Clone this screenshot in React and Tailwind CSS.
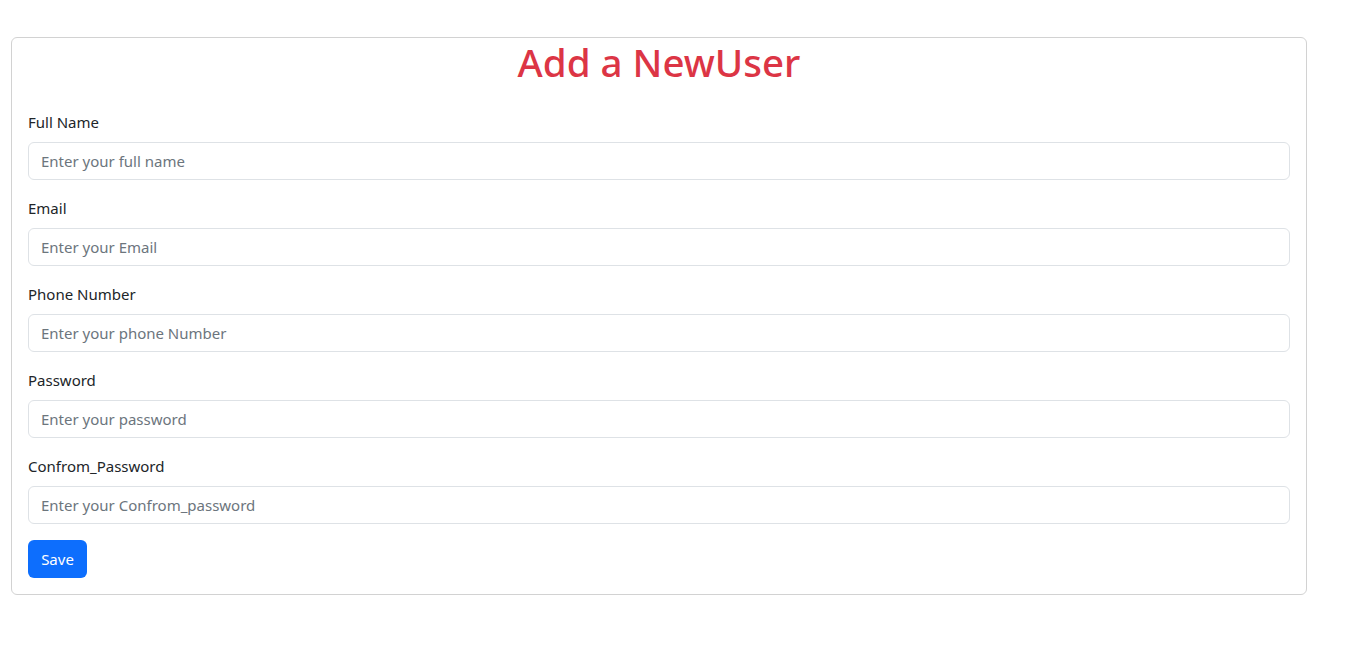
import { useState } from "react";

const fields = [
  { label: "Full Name", name: "name", type: "text", placeholder: "Enter your full name" },
  { label: "Email", name: "email", type: "email", placeholder: "Enter your Email" },
  { label: "Phone Number", name: "phone", type: "text", placeholder: "Enter your phone Number" },
  { label: "Password", name: "password", type: "password", placeholder: "Enter your password" },
  { label: "Confrom_Password", name: "confirm", type: "password", placeholder: "Enter your Confrom_password" },
];

const App = () => {
  const [form, setForm] = useState({});

  const handleChange = (e) => setForm({ ...form, [e.target.name]: e.target.value });

  return (
    <div className="min-h-screen bg-white pt-[37px] pl-[11px] font-['Noto_Sans',sans-serif] text-[#212529]">
      <div className="w-[1296px] border border-[#d2d2d2] rounded-[6px] px-4 pb-4">
        {/* Heading */}
        <h1 className="text-center text-[38.5px] leading-[48px] font-medium text-[#dc3545] mb-6">
          Add a NewUser
        </h1>

        <form onSubmit={(e) => e.preventDefault()}>
          {fields.map((f) => (
            <div key={f.name} className="mb-4">
              <label htmlFor={f.name} className="block text-[15px] leading-6 mb-2">
                {f.label}
              </label>
              <input
                id={f.name}
                name={f.name}
                type={f.type}
                placeholder={f.placeholder}
                value={form[f.name] || ""}
                onChange={handleChange}
                className="block w-full h-[38px] px-3 text-[15px] border border-[#dee2e6] rounded-[6px] placeholder:text-[#6c757d] outline-none"
              />
            </div>
          ))}

          <button
            type="submit"
            className="h-[38px] w-[59px] bg-[#0d6efd] text-white text-[15px] rounded-[6px]"
          >
            Save
          </button>
        </form>
      </div>
    </div>
  );
};

export default App;
